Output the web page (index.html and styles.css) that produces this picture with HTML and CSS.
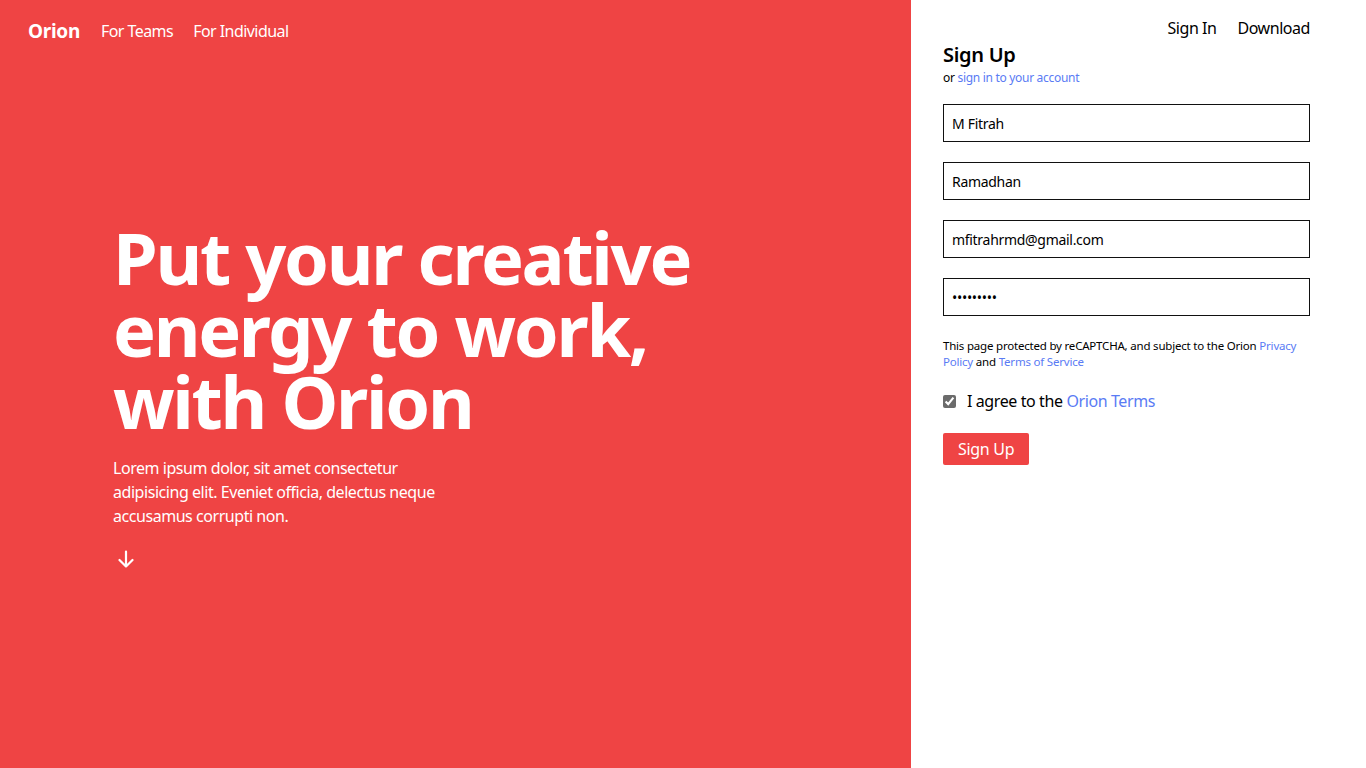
FILE: index.html
```html
<!DOCTYPE html>
<html lang="en">
<head>
<meta charset="utf-8">
<title>Orion - Sign Up</title>
<link rel="stylesheet" href="styles.css">
</head>
<body>
<div class="page">
  <section class="hero">
    <header class="hero-nav">
      <a class="brand" href="#">Orion</a>
      <a class="nav-link" href="#">For Teams</a>
      <a class="nav-link" href="#">For Individual</a>
    </header>
    <div class="hero-body">
      <h1 class="headline">Put your creative energy to work, with Orion</h1>
      <p class="lead">Lorem ipsum dolor, sit amet consectetur adipisicing elit. Eveniet officia, delectus neque accusamus corrupti non.</p>
      <svg class="arrow" width="18" height="18" viewBox="0 0 18 18" fill="none" stroke="#fff" stroke-width="2.2" stroke-linecap="round" stroke-linejoin="round"><path d="M9 1.5v15M2.5 10l6.5 6.5 6.5-6.5"/></svg>
    </div>
  </section>
  <section class="panel">
    <nav class="panel-nav">
      <a href="#">Sign In</a>
      <a href="#">Download</a>
    </nav>
    <h2 class="title">Sign Up</h2>
    <p class="sub">or <a href="#">sign in to your account</a></p>
    <form class="form">
      <input class="field" type="text" value="M Fitrah">
      <input class="field" type="text" value="Ramadhan">
      <input class="field" type="email" value="mfitrahrmd@gmail.com">
      <input class="field" type="password" value="123456789">
      <p class="notice">This page protected by reCAPTCHA, and subject to the Orion <a href="#">Privacy Policy</a> and <a href="#">Terms of Service</a></p>
      <label class="agree"><input type="checkbox" checked> <span>I agree to the <a href="#">Orion Terms</a></span></label>
      <div><button class="btn" type="button">Sign Up</button></div>
    </form>
  </section>
</div>
</body>
</html>
```
FILE: styles.css
```css
* { box-sizing: border-box; }
html, body { margin: 0; padding: 0; }
body {
  font-family: "Noto Sans", "Open Sans", sans-serif;
  color: #000;
  background: #fff;
}
a { text-decoration: none; color: inherit; }
.page {
  display: flex;
  min-height: 768px;
}
.hero {
  flex: 0 0 911px;
  background: #ef4444;
  color: #fff;
  min-height: 768px;
}
.hero-nav {
  display: flex;
  align-items: center;
  gap: 20px;
  padding: 18px 28px 0;
  height: 44px;
}
.brand {
  font-weight: 700;
  font-size: 19px;
  letter-spacing: -0.3px;
  margin-right: 1px;
}
.nav-link {
  font-size: 16px;
  letter-spacing: -0.55px;
}
.hero-body {
  padding: 177px 0 0 113px;
}
.headline {
  margin: 0;
  font-size: 72px;
  line-height: 72px;
  font-weight: 700;
  letter-spacing: -2.3px;
  width: 620px;
}
.lead {
  margin: 19px 0 0;
  font-size: 16px;
  line-height: 24px;
  width: 340px;
  letter-spacing: -0.45px;
}
.arrow {
  display: block;
  margin: 22px 0 0 4px;
}
.panel {
  flex: 1;
  padding: 0 56px 0 32px;
}
.panel-nav {
  display: flex;
  justify-content: flex-end;
  gap: 21px;
  padding-top: 16px;
  font-size: 16px;
  line-height: 24px;
  letter-spacing: -0.45px;
}
.title {
  margin: 1px 0 0;
  font-size: 20px;
  line-height: 28px;
  font-weight: 600;
  letter-spacing: -0.3px;
}
.sub {
  margin: 1px 0 0;
  font-size: 12px;
  line-height: 16px;
  letter-spacing: -0.3px;
}
.sub a, .notice a, .agree a { color: #5a7bf4; }
.form {
  display: flex;
  flex-direction: column;
  gap: 20px;
  margin-top: 18px;
}
.field {
  display: block;
  width: 100%;
  height: 38px;
  border: 1px solid #111;
  padding: 0 8px;
  font-family: inherit;
  font-size: 14px;
  letter-spacing: -0.3px;
  color: #000;
  outline: none;
  border-radius: 0;
}
.notice {
  margin: 2px 0 0;
  font-size: 11.5px;
  line-height: 16px;
  letter-spacing: -0.2px;
}
.agree {
  display: flex;
  align-items: center;
  gap: 11px;
  font-size: 16px;
  line-height: 24px;
  letter-spacing: -0.4px;
  margin-top: -1px;
}
.agree input {
  margin: 0;
  width: 13px;
  height: 13px;
  accent-color: #6b6b6b;
}
.btn {
  margin-top: 0;
  background: #ef4444;
  color: #fff;
  border: 0;
  border-radius: 2px;
  font-family: inherit;
  font-size: 16px;
  letter-spacing: -0.3px;
  padding: 0 15px;
  height: 32px;
  cursor: pointer;
}
```
